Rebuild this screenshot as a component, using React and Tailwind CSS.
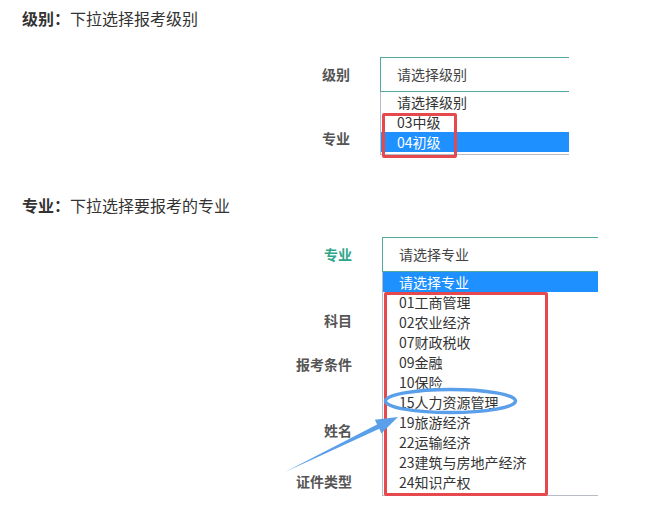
import React from "react";

const font = { fontFamily: '"Noto Sans CJK SC", "Noto Sans", sans-serif' };

function Item({ children, active }) {
  return (
    <div
      className={
        "h-[20px] leading-[20px] pl-[16px] text-[14px] whitespace-nowrap " +
        (active ? "bg-[#1e90ff] text-white" : "text-[#333]")
      }
    >
      {children}
    </div>
  );
}

export default function App() {
  const majors = [
    "01工商管理",
    "02农业经济",
    "07财政税收",
    "09金融",
    "10保险",
    "15人力资源管理",
    "19旅游经济",
    "22运输经济",
    "23建筑与房地产经济",
    "24知识产权",
  ];
  return (
    <div className="relative w-[655px] h-[505px] bg-white overflow-hidden" style={font}>
      <p className="pl-[22px] pt-[8px] h-[28px] leading-[20px] text-[16px] text-[#333]">
        <span className="font-bold">级别：</span>下拉选择报考级别
      </p>

      {/* section 1 */}
      <div className="flex mt-[29px]">
        <div className="w-[350px] flex flex-col items-end text-[14px] font-bold text-[#555]">
          <div className="h-[35px] flex items-center">级别</div>
          <div className="mt-[29px] h-[35px] flex items-center">专业</div>
        </div>
        <div className="relative ml-[30px] w-[189px]">
          <div className="h-[35px] border-y border-l border-[#52a89c] pl-[16px] flex items-center text-[14px] text-[#444]">
            请选择级别
          </div>
          <div className="border-l border-b border-[#b8bcc6] pb-[2px]">
            <Item>请选择级别</Item>
            <Item>03中级</Item>
            <Item active>04初级</Item>
          </div>
          <div className="absolute left-[2px] top-[56px] w-[75px] h-[45px] border-[3px] border-[#e5484d] rounded-[2px]" />
        </div>
      </div>

      <p className="pl-[22px] mt-[39px] h-[20px] leading-[20px] text-[16px] text-[#333]">
        <span className="font-bold">专业：</span>下拉选择要报考的专业
      </p>

      {/* section 2 */}
      <div className="flex mt-[22px]">
        <div className="w-[352px] flex flex-col items-end text-[14px] font-bold text-[#555]">
          <div className="h-[34px] flex items-center text-[#2fa58a]">专业</div>
          <div className="mt-[39px] h-[20px] leading-[20px]">科目</div>
          <div className="mt-[24px] h-[20px] leading-[20px]">报考条件</div>
          <div className="mt-[46px] h-[20px] leading-[20px]">姓名</div>
          <div className="mt-[31px] h-[20px] leading-[20px]">证件类型</div>
        </div>
        <div className="relative ml-[30px] w-[216px]">
          <div className="h-[35px] border-y border-l border-[#52a89c] pl-[16px] flex items-center text-[14px] text-[#444]">
            请选择专业
          </div>
          <div className="border-l border-b border-[#b8bcc6] pb-[3px]">
            <Item active>请选择专业</Item>
            {majors.map((m) => (
              <Item key={m}>{m}</Item>
            ))}
          </div>
          <div className="absolute left-[2px] top-[55px] w-[164px] h-[204px] border-[3px] border-[#e5484d] rounded-[2px]" />
        </div>
      </div>

      <svg
        className="absolute left-0 top-0 pointer-events-none"
        width="655"
        height="505"
        viewBox="0 0 655 505"
      >
        <ellipse cx="450.5" cy="401" rx="65" ry="11.5" fill="none" stroke="#5a9fe9" strokeWidth="3.5" />
        <polygon
          points="285,472 379.3,428.8 381.3,433.4 398,417 374.9,419.8 377.1,424.4"
          fill="#5a9fe9"
        />
      </svg>
    </div>
  );
}
